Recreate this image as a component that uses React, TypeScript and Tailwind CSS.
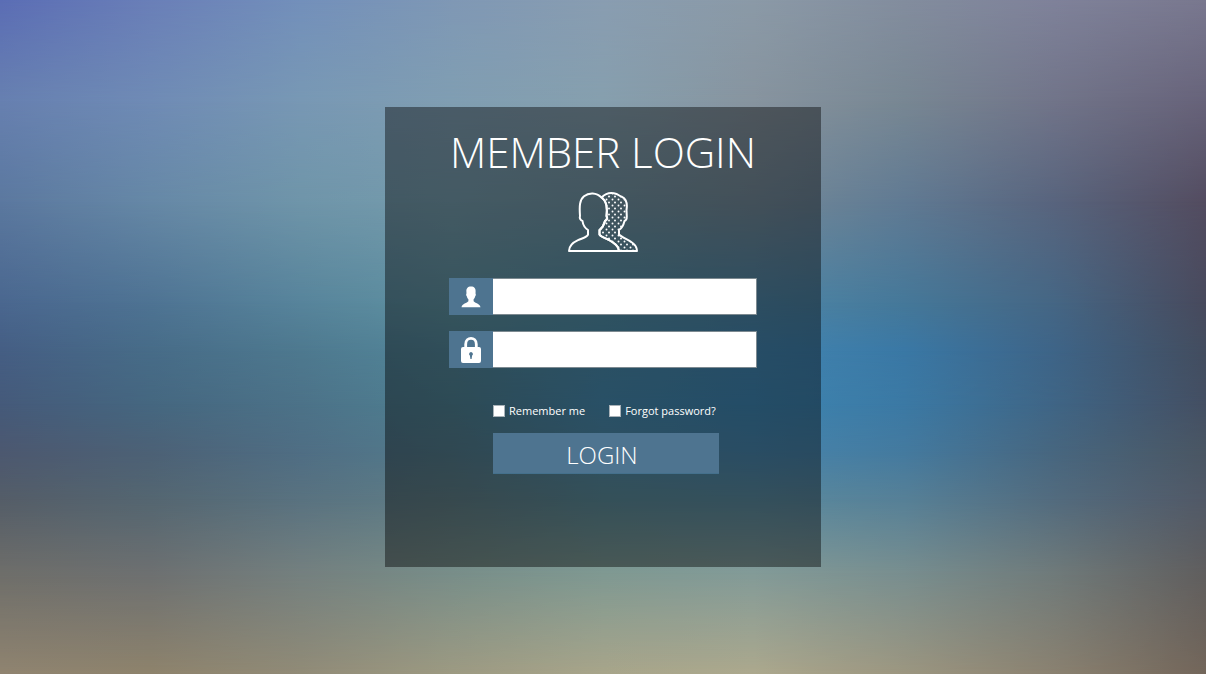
import React from "react";

/* Colour mesh of the backdrop: each row is a horizontal gradient that fades into the next one. */
const meshRows: { at: number; colors: string[] }[] = [
  { at: 0, colors: ["#5b6db5", "#6a7fb8", "#7390bb", "#7f98b5", "#899db1", "#8b9aa7", "#838d9e", "#7f829a", "#79788f"] },
  { at: 15, colors: ["#6780b0", "#6f8bb5", "#7898b4", "#809eb2", "#869fae", "#87949f", "#788793", "#717489", "#67637a"] },
  { at: 30, colors: ["#5b789f", "#6688a6", "#6f95a9", "#759bac", "#7294a4", "#738a99", "#607a93", "#58647d", "#534c60"] },
  { at: 45, colors: ["#4a678f", "#4e7393", "#57849b", "#5f92a1", "#548fa6", "#4e86a7", "#457899", "#456684", "#484a5d"] },
  { at: 52, colors: ["#455e84", "#476c88", "#4e798f", "#53879a", "#4b8bab", "#4385b0", "#3a78a5", "#3e6487", "#434d5f"] },
  { at: 60, colors: ["#455a7a", "#456780", "#4c7288", "#4f8193", "#478ab0", "#3e85b1", "#3b79a4", "#3f6585", "#444f63"] },
  { at: 67, colors: ["#4c5870", "#4c6176", "#4f6e84", "#537c8d", "#4f8aa7", "#4885ac", "#447a9f", "#47667f", "#4a5663"] },
  { at: 74, colors: ["#545d68", "#546671", "#597280", "#5f7e87", "#5b8a99", "#5a8a9f", "#568097", "#526b7e", "#515967"] },
  { at: 85, colors: ["#6e6e6a", "#6d7071", "#74807f", "#788e89", "#7f9992", "#839b98", "#788e8f", "#6f7a7a", "#605e5e"] },
  { at: 100, colors: ["#908470", "#8e836c", "#918b77", "#9d9a82", "#a8a58a", "#aca88d", "#9c9680", "#8a8170", "#73665a"] },
];

function Backdrop() {
  return (
    <div aria-hidden="true" className="absolute inset-0 overflow-hidden">
      {meshRows.map((row, i) => {
        const fade =
          i === 0 ? undefined : `linear-gradient(to bottom, transparent ${meshRows[i - 1].at}%, black ${row.at}%)`;
        return (
          <div
            key={row.at}
            className="absolute inset-0"
            style={{ backgroundImage: `linear-gradient(to right, ${row.colors.join(", ")})`, maskImage: fade }}
          />
        );
      })}
    </div>
  );
}

function MembersIcon() {
  return (
    <svg viewBox="0 0 70 60" className="h-[60px] w-[70px]" fill="none" stroke="white" strokeWidth="2" strokeLinejoin="round" aria-hidden="true">
      <defs>
        <pattern id="dots" width="6" height="6" patternUnits="userSpaceOnUse">
          <circle cx="2.5" cy="1.5" r="0.95" fill="white" stroke="none" />
          <circle cx="5" cy="4.5" r="0.95" fill="white" stroke="none" />
        </pattern>
      </defs>
      <path
        fill="url(#dots)"
        d="M33.500 5.500C37.500 1.500 43 0 48.500 2C51 3 52 4.300 54 4.800C58.500 7 59.500 12 58.500 18L58.800 24.500C58.800 27 58 28.500 56.500 29C55.500 33 53.500 36.500 51 38V42.500C54 45.500 60 47.500 64 50.500C67.500 53 69 55.500 69 59H51C51 54 46 51 41 48C36 45.500 32 44.500 31.500 42.500V38C34 36 36 33 37 29C39 28 39.500 26 38.500 24C39.500 16 39 9 33.500 5.500Z"
      />
      <path d="M12 24C11.300 14 11.500 8 16 4.300C21 0.300 28.500 0.500 33.500 5.500C39 9 39.500 16 38.500 24C39.500 26 39 28 37 29C36 33 34 36 31.500 38V42.500C32 44.500 36 45.500 41 48C46 51 51 54 51 59H1C1 54 5 50.500 10 48.200C15 46 19.500 45 20 42.500V38C17 36 15 33 14.500 29C12.500 28.500 11.200 26 12 24Z" />
    </svg>
  );
}

function UserIcon() {
  return (
    <svg viewBox="0 0 20 22" className="h-[22px] w-5" fill="white" aria-hidden="true">
      <path d="M10 0.500C13.300 0.500 14.900 2.500 14.600 5.700L14.500 7.500C15.100 8 14.800 9.900 14.200 10.200C13.900 11.700 13.300 12.600 12.600 13.300V15.300C13.800 17 19 17.600 19.500 21.300H0.500C1 17.600 6.200 17 7.400 15.300V13.300C6.700 12.600 6.100 11.700 5.800 10.200C5.200 9.900 4.900 8 5.500 7.500L5.400 5.700C5.100 2.500 6.700 0.500 10 0.500Z" />
    </svg>
  );
}

function LockIcon() {
  return (
    <svg viewBox="0 0 20 28" className="h-7 w-5" aria-hidden="true">
      <path d="M4.700 11V8.200C4.700 0.500 15.300 0.500 15.300 8.200V11" fill="none" stroke="white" strokeWidth="2.800" />
      <path
        fill="white"
        fillRule="evenodd"
        d="M2 11H18Q20 11 20 13V25Q20 27 18 27H2Q0 27 0 25V13Q0 11 2 11ZM10 16A2 2 0 0 0 8.900 19.600L9.400 23H10.600L11.100 19.600A2 2 0 0 0 10 16Z"
      />
    </svg>
  );
}

function Field({ id, label, type, icon }: { id: string; label: string; type: string; icon: React.ReactNode }) {
  return (
    <div className="flex h-[37px]">
      <label htmlFor={id} aria-label={label} className="flex w-11 shrink-0 items-center justify-center bg-[#4e7490]">
        {icon}
      </label>
      <input
        id={id}
        type={type}
        className="min-w-0 flex-1 border border-l-0 border-[#7d8a91] bg-white px-3 text-base text-gray-800 outline-none"
      />
    </div>
  );
}

function Check({ id, label }: { id: string; label: string }) {
  return (
    <div className="flex items-center gap-1">
      <input
        id={id}
        type="checkbox"
        className="size-3 appearance-none border border-[#a9b2b8] bg-white checked:bg-[#4e7490]"
      />
      <label htmlFor={id} className="text-[11px] leading-4 whitespace-nowrap">
        {label}
      </label>
    </div>
  );
}

export default function App() {
  return (
    <main className="relative flex min-h-screen items-center justify-center font-['Open_Sans','Noto_Sans',sans-serif] text-white">
      <Backdrop />
      <form
        onSubmit={(e) => e.preventDefault()}
        className="relative flex w-full max-w-[436px] flex-col bg-black/42 px-16 pt-5 pb-[93px]"
      >
        <h1 className="text-center text-[42px] leading-[50px] font-light whitespace-nowrap">MEMBER LOGIN</h1>
        <div className="mt-[15px] flex justify-center">
          <MembersIcon />
        </div>
        <div className="mt-[26px] flex flex-col gap-4">
          <Field id="username" label="Username" type="text" icon={<UserIcon />} />
          <Field id="password" label="Password" type="password" icon={<LockIcon />} />
        </div>
        <div className="mt-[35px] mr-[38px] ml-11 flex flex-col gap-3.5">
          <div className="flex gap-6">
            <Check id="remember" label="Remember me" />
            <Check id="forgot" label="Forgot password?" />
          </div>
          <button
            type="submit"
            className="h-[41px] border-b border-[#44708c] bg-[#4e7490] pt-1 pr-2 text-2xl leading-9 font-light"
          >
            LOGIN
          </button>
        </div>
      </form>
    </main>
  );
}
